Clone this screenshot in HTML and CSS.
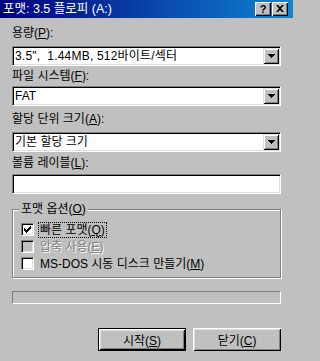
FILE: index.html
```html
<!DOCTYPE html>
<html lang="ko">
<head>
<meta charset="utf-8">
<title>포맷</title>
<link rel="stylesheet" href="styles.css">
</head>
<body>
<div class="window">
  <div class="titlebar">
    <span class="title">포맷: 3.5 플로피 (A:)</span>
    <div class="tb-buttons">
      <span class="tbtn help">?</span>
      <span class="tbtn close"><svg width="8" height="7" viewBox="0 0 8 7"><path d="M0 0h2l2 2 2-2h2L5 3.5 8 7H6L4 5 2 7H0l3-3.5z"/></svg></span>
    </div>
  </div>
  <div class="content">
    <div class="lbl l1">용량(<u>P</u>):</div>
    <div class="field combo c1"><span class="val">3.5",&nbsp; 1.44MB, 512바이트/섹터</span><span class="drop"><svg width="7" height="4" viewBox="0 0 7 4" shape-rendering="crispEdges"><path d="M0 0h7v1H0zM1 1h5v1H1zM2 2h3v1H2zM3 3h1v1H3z"/></svg></span></div>
    <div class="lbl l2">파일 시스템(<u>F</u>):</div>
    <div class="field combo c2"><span class="val">FAT</span><span class="drop"><svg width="7" height="4" viewBox="0 0 7 4" shape-rendering="crispEdges"><path d="M0 0h7v1H0zM1 1h5v1H1zM2 2h3v1H2zM3 3h1v1H3z"/></svg></span></div>
    <div class="lbl l3">할당 단위 크기(<u>A</u>):</div>
    <div class="field combo c3"><span class="val">기본 할당 크기</span><span class="drop"><svg width="7" height="4" viewBox="0 0 7 4" shape-rendering="crispEdges"><path d="M0 0h7v1H0zM1 1h5v1H1zM2 2h3v1H2zM3 3h1v1H3z"/></svg></span></div>
    <div class="lbl l4">볼륨 레이블(<u>L</u>):</div>
    <div class="field textbox"></div>
    <fieldset class="group">
      <legend>포맷 옵션(<u>O</u>)</legend>
      <div class="rows">
        <div class="chk"><span class="box"><svg width="7" height="7" viewBox="0 0 7 7" shape-rendering="crispEdges"><path d="M0 2h1v3H0zM1 3h1v3H1zM2 4h1v3H2zM3 3h1v3H3zM4 2h1v3H4zM5 1h1v3H5zM6 0h1v3H6z"/></svg></span><span class="txt focus">빠른 포맷(<u>Q</u>)</span></div>
        <div class="chk disabled"><span class="box"></span><span class="txt">압축 사용(<u>E</u>)</span></div>
        <div class="chk"><span class="box"></span><span class="txt">MS-DOS 시동 디스크 만들기(<u>M</u>)</span></div>
      </div>
    </fieldset>
    <div class="progress"></div>
    <div class="buttons">
      <button class="btn default">시작(<u>S</u>)</button>
      <button class="btn">닫기(<u>C</u>)</button>
    </div>
  </div>
</div>
</body>
</html>
```
FILE: styles.css
```css
* { box-sizing: border-box; }
html, body { margin: 0; padding: 0; }
body {
  width: 293px;
  height: 361px;
  overflow: hidden;
  background: #c0c0c0;
  font-family: "Liberation Sans", "Noto Sans CJK KR", sans-serif;
  font-size: 12px;
  color: #000;
}
u { text-underline-offset: 1px; }
.window { width: 293px; height: 361px; background: #c0c0c0; }
.titlebar {
  height: 18px;
  background: linear-gradient(to right, #000080, #1084d0);
  display: flex;
  align-items: center;
  padding: 0 5px 0 3px;
  color: #fff;
}
.title { flex: 1; line-height: 14px; font-size: 12.5px; }
.tb-buttons { display: flex; gap: 1px; }
.tbtn {
  width: 16px;
  height: 14px;
  background: #c0c0c0;
  color: #000;
  box-shadow: inset 1px 1px #fff, inset -1px -1px #000, inset -2px -2px #808080;
  display: flex;
  align-items: center;
  justify-content: center;
}
.help { font-weight: bold; font-size: 11px; line-height: 14px; padding-bottom: 1px; }
.close { padding-bottom: 1px; }
.content { padding: 0 12px; }
.lbl { height: 14px; line-height: 14px; white-space: nowrap; }
.l1 { margin-top: 8px; }
.l2 { margin-top: 3px; }
.l3 { margin-top: 6px; }
.l4 { margin-top: 4px; }
.field {
  height: 20px;
  background: #fff;
  border: 1px solid;
  border-color: #808080 #fff #fff #808080;
  box-shadow: inset 1px 1px #000, inset -1px -1px #dfdfdf;
}
.combo { display: flex; align-items: center; padding: 1px 1px 1px 2px; }
.c1 { margin-top: 6px; }
.c2 { margin-top: 3px; }
.c3 { margin-top: 6px; }
.textbox { margin-top: 4px; }
.val { flex: 1; line-height: 14px; white-space: nowrap; }
.c1 .val { letter-spacing: 0.2px; }
.drop {
  width: 16px;
  height: 16px;
  background: #c0c0c0;
  box-shadow: inset 1px 1px #dfdfdf, inset -1px -1px #000, inset 2px 2px #fff, inset -2px -2px #808080;
  display: flex;
  align-items: center;
  justify-content: center;
}
.group {
  margin: 8px 0 0;
  padding: 0 6px 5px;
  border: 1px solid #808080;
  box-shadow: inset 1px 1px #fff, 1px 1px #fff;
  min-width: 0;
}
.group legend { padding: 0 2px; line-height: 14px; background: #c0c0c0; }
.rows { margin-top: 5px; display: flex; flex-direction: column; }
.chk { display: flex; align-items: center; height: 17px; margin-left: 2px; white-space: nowrap; }
.box {
  width: 13px;
  height: 13px;
  flex: none;
  background: #fff;
  border: 1px solid;
  border-color: #808080 #fff #fff #808080;
  box-shadow: inset 1px 1px #000, inset -1px -1px #dfdfdf;
  margin-right: 5px;
  display: flex;
  align-items: center;
  justify-content: center;
}
.txt { line-height: 14px; padding: 0 1px; }
.focus { outline: 1px dotted #000; }
.disabled .box { background: #c0c0c0; }
.disabled .txt { color: #808080; text-shadow: 1px 1px #fff; }
.progress {
  margin-top: 13px;
  height: 13px;
  border: 1px solid;
  border-color: #808080 #fff #fff #808080;
}
.buttons { display: flex; justify-content: flex-end; gap: 7px; margin-top: 24px; }
.btn {
  width: 88px;
  height: 23px;
  padding: 0;
  background: #c0c0c0;
  border: 0;
  font-family: inherit;
  font-size: 12px;
  color: #000;
  box-shadow: inset 1px 1px #fff, inset -1px -1px #000, inset 2px 2px #dfdfdf, inset -2px -2px #808080;
}
.btn.default {
  border: 1px solid #000;
}
```
